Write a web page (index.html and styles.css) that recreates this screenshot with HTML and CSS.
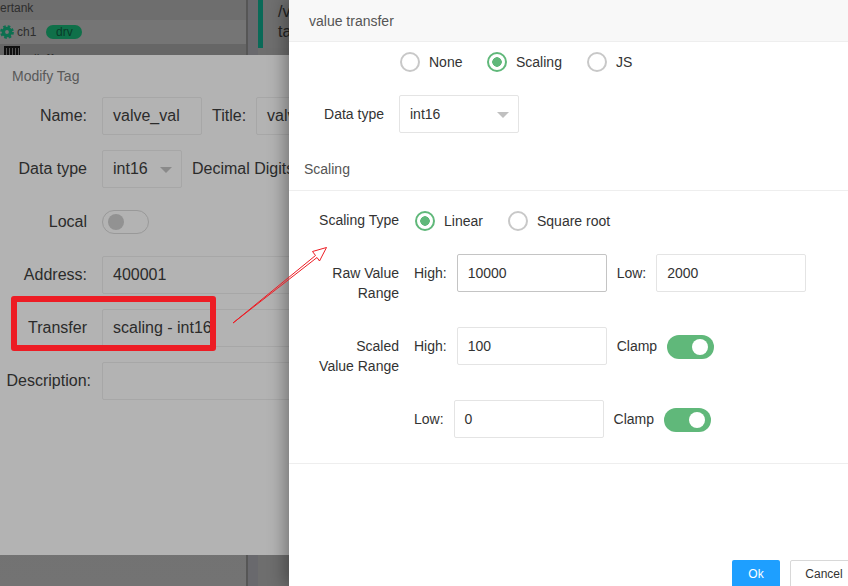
FILE: index.html
```html
<!DOCTYPE html>
<html lang="en">
<head>
<meta charset="utf-8">
<title>value transfer</title>
<link rel="stylesheet" href="styles.css">
</head>
<body>
<div class="app">
  <aside class="tree">
    <div class="tree-row tree-first">ertank</div>
    <div class="tree-row tree-active">
      <svg class="gear" viewBox="0 0 14 14" width="14" height="14"><circle class="gear-ring" cx="7" cy="7" r="3.6"/><circle class="gear-teeth" cx="7" cy="7" r="5.6"/></svg>
      <span>ch1</span><span class="badge">drv</span>
    </div>
    <div class="tree-row tree-grid"><span class="grid-icon"></span><span class="grid-text">dief1</span></div>
  </aside>
  <main class="content">
    <div class="note">/v<br>ta</div>
  </main>
</div>

<section class="modal">
  <header class="modal-head">Modify Tag</header>
  <div class="form-row">
    <label class="m-label">Name:</label><div class="m-field m-name">valve_val</div>
    <label class="m-inline">Title:</label><div class="m-field m-wide">valve_val</div>
  </div>
  <div class="form-row">
    <label class="m-label">Data type</label><div class="m-field m-select">int16<i class="caret m-caret"></i></div>
    <label class="m-digits">Decimal Digits</label>
  </div>
  <div class="form-row">
    <label class="m-label">Local</label><span class="m-toggle"><i></i></span>
  </div>
  <div class="form-row">
    <label class="m-label">Address:</label><div class="m-field m-wide">400001</div>
  </div>
  <div class="form-row">
    <label class="m-label">Transfer</label><div class="m-field m-wide">scaling - int16</div>
  </div>
  <div class="form-row">
    <label class="m-label m-long">Description:</label><div class="m-field m-wide"></div>
  </div>
</section>

<section class="drawer">
  <header class="drawer-head">value transfer</header>
  <div class="radio-group group-top">
    <span class="radio-item item-none"><i class="radio"></i>None</span>
    <span class="radio-item item-scaling"><i class="radio on"></i>Scaling</span>
    <span class="radio-item"><i class="radio"></i>JS</span>
  </div>
  <div class="type-row">
    <label class="d-label">Data type</label>
    <div class="d-field d-select">int16<i class="caret"></i></div>
  </div>
  <h2 class="section-title">Scaling</h2>
  <div class="scaling">
    <div class="s-row s-type">
      <label class="s-label">Scaling Type</label>
      <div class="radio-group">
        <span class="radio-item item-linear"><i class="radio on"></i>Linear</span>
        <span class="radio-item"><i class="radio"></i>Square root</span>
      </div>
    </div>
    <div class="s-row s-raw">
      <label class="s-label two-line">Raw Value<br>Range</label>
      <span class="pre high">High:</span>
      <div class="d-field d-num d-focus">10000</div>
      <span class="pre low">Low:</span>
      <div class="d-field d-num">2000</div>
    </div>
    <div class="s-row s-scaled">
      <label class="s-label two-line">Scaled<br>Value Range</label>
      <span class="pre high">High:</span>
      <div class="d-field d-num">100</div>
      <span class="pre clamp">Clamp</span>
      <span class="toggle"><i></i></span>
    </div>
    <div class="s-row s-low">
      <span class="pre low-pre">Low:</span>
      <div class="d-field d-num">0</div>
      <span class="pre clamp">Clamp</span>
      <span class="toggle"><i></i></span>
    </div>
  </div>
  <footer class="drawer-foot">
    <button class="btn btn-ok">Ok</button>
    <button class="btn btn-cancel">Cancel</button>
  </footer>
</section>

<div class="callout"></div>
<svg class="arrow" width="848" height="586" viewBox="0 0 848 586">
  <path d="M233 323 L315.5 255.5 L312.5 251.5 L326.5 247.5 L319.5 261 L317 257.5 Z"/>
</svg>
</body>
</html>
```
FILE: styles.css
```css
* { box-sizing: border-box; }
html, body { margin: 0; height: 100%; }
body {
  width: 848px;
  height: 586px;
  overflow: hidden;
  position: relative;
  font-family: "Liberation Sans", Arial, sans-serif;
  background: #6d6d6d;
  color: #333;
}

/* dimmed application behind the dialogs */
.app { display: flex; height: 586px; }
.tree {
  width: 248px;
  background: linear-gradient(#6a6a6a, #737373);
  border-right: 2px solid #565656;
  font-size: 12px;
  color: #2d2d2d;
  overflow: hidden;
}
.tree-row { display: flex; align-items: center; white-space: nowrap; }
.tree-first { height: 20px; padding-bottom: 4px; background: #6e6e6e; }
.tree-active { height: 24px; background: #757575; }
.gear { margin-right: 3px; flex: none; }
.gear-ring { fill: none; stroke: #0d7050; stroke-width: 3.4; }
.gear-teeth { fill: none; stroke: #0d7050; stroke-width: 2.6; stroke-dasharray: 2.5 1.9; }
.badge {
  margin-left: 10px;
  width: 36px;
  height: 14px;
  line-height: 14px;
  border-radius: 7px;
  background: #0f7049;
  color: #0a3b28;
  text-align: center;
}
.tree-grid { height: 24px; background: #666; align-items: flex-start; }
.grid-icon {
  width: 16px;
  height: 10px;
  margin: 2px 10px 0 4px;
  flex: none;
  background: repeating-linear-gradient(90deg, #111 0 2px, #555 2px 3px);
  border-top: 2px solid #111;
}
.grid-text { margin-top: 8px; }
.content {
  flex: 1;
  background: #6e6e6e;
  border-left: 10px solid #69696d;
}
.note {
  height: 48px;
  border-left: 5px solid #0a6a58;
  background: #6f6f6f;
  padding: 2px 0 0 15px;
  font-size: 16px;
  line-height: 20px;
  color: #222;
}

/* Modify Tag dialog */
.modal {
  position: absolute;
  left: 0;
  top: 55px;
  width: 289px;
  height: 500px;
  background: #b3b3b3;
  overflow: hidden;
  font-size: 16px;
  color: #2b2b2b;
}
.modal-head {
  height: 42px;
  padding: 12px 0 0 12px;
  font-size: 14px;
  line-height: 18px;
  color: #595959;
  white-space: nowrap;
}
.form-row {
  display: flex;
  align-items: flex-start;
  height: 53px;
  white-space: nowrap;
}
.m-label {
  width: 87px;
  margin-right: 15px;
  text-align: right;
  flex: none;
  line-height: 37px;
}
.m-long { width: 91px; margin-right: 11px; }
.m-field {
  position: relative;
  height: 38px;
  line-height: 36px;
  padding-left: 10px;
  border: 1px solid #a7a7a7;
  border-radius: 2px;
  flex: none;
}
.m-name { width: 100px; }
.m-inline { margin-left: 10px; margin-right: 10px; line-height: 37px; }
.m-wide { width: 260px; }
.m-select { width: 80px; }
.m-digits { margin-left: 10px; line-height: 37px; }
.caret {
  position: absolute;
  right: 9px;
  top: 16px;
  width: 0;
  height: 0;
  border-left: 6px solid transparent;
  border-right: 6px solid transparent;
  border-top: 6px solid #c0c0c0;
}
.m-caret { border-top-color: #8a8a8a; }
.m-toggle {
  display: block;
  width: 47px;
  height: 24px;
  margin-top: 7px;
  border: 1px solid #999;
  border-radius: 12px;
  flex: none;
  padding: 3px 0 0 5px;
}
.m-toggle i {
  display: block;
  width: 16px;
  height: 16px;
  border-radius: 50%;
  background: #929292;
}

/* value transfer drawer */
.drawer {
  position: absolute;
  left: 289px;
  top: 0;
  width: 559px;
  height: 586px;
  background: #fff;
  box-shadow: -4px 0 16px rgba(0, 0, 0, .35);
  font-size: 14px;
  color: #333;
  white-space: nowrap;
  overflow: visible;
}
.drawer-head {
  height: 42px;
  padding: 13px 0 0 20px;
  line-height: 16px;
  background: #f8f8f8;
  border-bottom: 1px solid #eee;
  color: #555;
}
.radio-group { display: flex; align-items: center; }
.group-top { padding: 9px 0 0 111px; height: 53px; align-items: flex-start; }
.radio-item { display: flex; align-items: center; height: 21px; }
.item-none { width: 87px; }
.item-scaling { width: 100px; }
.item-linear { width: 93px; }
.radio {
  width: 20px;
  height: 20px;
  margin-right: 9px;
  border: 2px solid #c8c8c8;
  border-radius: 50%;
  background: #fff;
  flex: none;
}
.radio.on {
  border-color: #60b87a;
  background: radial-gradient(circle, #60b87a 0 4.5px, #fff 5px);
}
.type-row { display: flex; align-items: center; height: 38px; }
.d-label {
  width: 110px;
  flex: none;
  padding-right: 15px;
  text-align: right;
  line-height: 20px;
}
.s-label {
  width: 110px;
  flex: none;
  text-align: right;
  line-height: 20px;
}
.d-field {
  position: relative;
  height: 38px;
  line-height: 36px;
  padding-left: 10px;
  border: 1px solid #e4e4e4;
  border-radius: 2px;
  flex: none;
}
.d-select { width: 120px; }
.section-title {
  margin: 0;
  height: 58px;
  padding: 28px 0 0 15px;
  font-size: 14px;
  font-weight: 400;
  line-height: 16px;
  color: #555;
  border-bottom: 1px solid #eee;
}
.scaling {
  height: 273px;
  border-bottom: 1px solid #eee;
}
.s-row { display: flex; align-items: flex-start; }
.s-type { height: 63px; padding-top: 19px; }
.s-type .radio-group { margin-left: 16px; }
.s-raw { height: 73px; }
.s-scaled { height: 73px; }
.two-line { padding-top: 9px; }
.pre { line-height: 38px; flex: none; }
.high { margin-left: 15px; margin-right: 10px; }
.low { margin-left: 10px; margin-right: 10px; }
.low-pre { margin-left: 125px; margin-right: 10px; }
.clamp { margin-left: 10px; margin-right: 10px; }
.d-num { width: 150px; }
.d-focus { border-color: #c4c4c4; }
.toggle {
  display: block;
  width: 47px;
  height: 24px;
  margin-top: 8px;
  padding: 4px 0 0 25px;
  border-radius: 12px;
  background: #60b87a;
  flex: none;
}
.toggle i {
  display: block;
  width: 16px;
  height: 16px;
  border-radius: 50%;
  background: #fff;
}
.drawer-foot {
  display: flex;
  gap: 10px;
  padding: 96px 0 0 443px;
}
.btn {
  height: 28px;
  flex: none;
  padding: 0;
  border-radius: 2px;
  font: 12px "Liberation Sans", Arial, sans-serif;
}
.btn-ok { width: 48px; background: #1e9fff; border: 0; color: #fff; }
.btn-cancel { width: 68px; background: #fff; border: 1px solid #d8d8d8; color: #333; }

/* annotations drawn over the screenshot */
.callout {
  position: absolute;
  left: 11px;
  top: 296px;
  width: 205px;
  height: 55px;
  border: 6px solid #ed1c24;
  border-radius: 3px;
}
.arrow { position: absolute; left: 0; top: 0; fill: none; stroke: #ed1c24; stroke-width: 1; }
```
